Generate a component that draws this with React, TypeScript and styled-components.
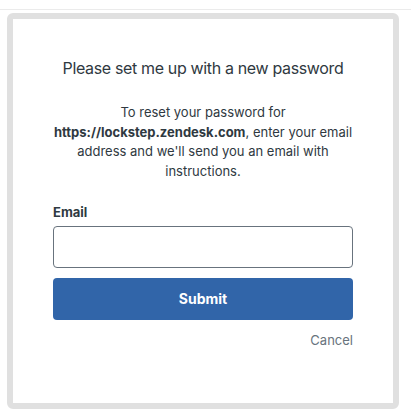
import React from "react";
import styled, { createGlobalStyle } from "styled-components";

const Global = createGlobalStyle`
  html, body { margin: 0; padding: 0; background: #ffffff; }
  body { font-family: Inter, "Noto Sans", "Liberation Sans", sans-serif; color: #2f3941; -webkit-font-smoothing: antialiased; }
  * { box-sizing: border-box; }
`;

const TopBar = styled.div`
  height: 10px;
  border-bottom: 1px solid #ebebeb;
`;

const Modal = styled.div`
  margin: 3px 0 0 7px;
  width: 392px;
  height: 396px;
  border: 6px solid #e0e0e0;
  border-radius: 6px;
  background: #fff;
  padding: 39px 40px 0 40px;
  display: flex;
  flex-direction: column;
`;

const Title = styled.h2`
  margin: 0;
  font-size: 16px;
  font-weight: 400;
  line-height: 20px;
  letter-spacing: -0.35px;
  text-align: center;
  color: #2f3941;
`;

const Intro = styled.p`
  margin: 25px 0 0;
  font-size: 13px;
  line-height: 19.7px;
  text-align: center;
  color: #2f3941;
  strong { font-weight: 700; }
`;

const Label = styled.label`
  display: block;
  margin-top: 20px;
  font-size: 13px;
  font-weight: 700;
  line-height: 20px;
  color: #2f3941;
`;

const Input = styled.input`
  margin-top: 4px;
  width: 100%;
  height: 42px;
  border: 1px solid #68737d;
  border-radius: 4px;
  padding: 0 12px;
  font: inherit;
  font-size: 14px;
  outline: none;
`;

const Button = styled.button`
  margin-top: 10px;
  width: 100%;
  height: 42px;
  border: none;
  border-radius: 4px;
  background: #3165a9;
  color: #fff;
  font: inherit;
  font-size: 14px;
  font-weight: 700;
`;

const Actions = styled.div`
  margin-top: 10px;
  display: flex;
  justify-content: flex-end;
`;

const CancelLink = styled.a`
  font-size: 13px;
  line-height: 20px;
  color: #68737d;
  text-decoration: none;
`;

export default function App() {
  return (
    <>
      <Global />
      <TopBar />
      <Modal>
        <Title>Please set me up with a new password</Title>
        <Intro>
          To reset your password for <strong>https://lockstep.zendesk.com</strong>, enter your email
          address and we'll send you an email with instructions.
        </Intro>
        <Label htmlFor="email">Email</Label>
        <Input id="email" type="email" />
        <Button type="button">Submit</Button>
        <Actions>
          <CancelLink href="#">Cancel</CancelLink>
        </Actions>
      </Modal>
    </>
  );
}
